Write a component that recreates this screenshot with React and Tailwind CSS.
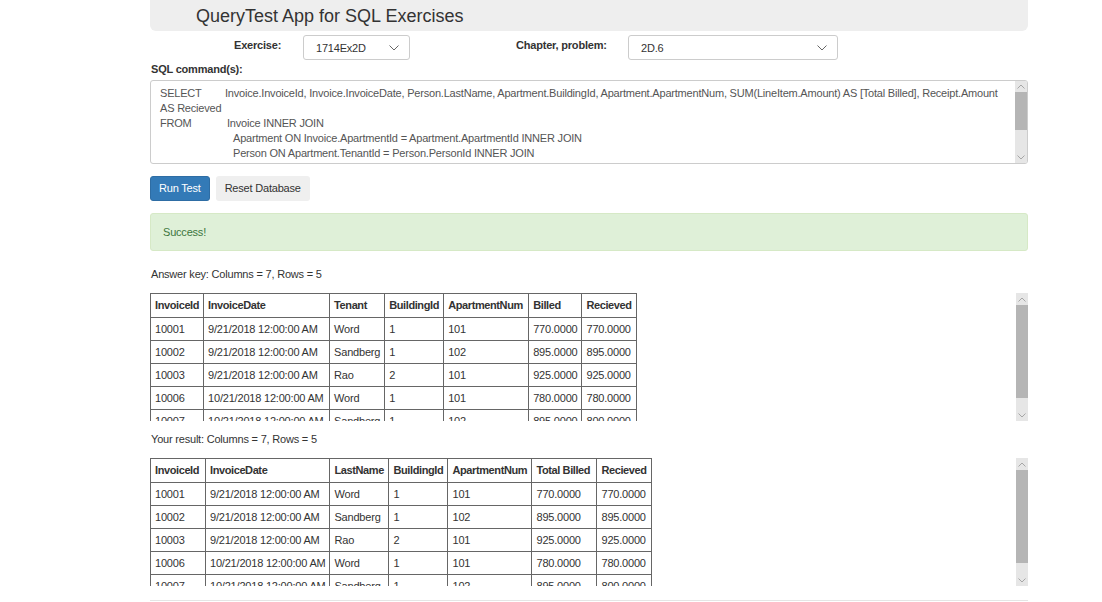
import React from "react";

const answerKey = {
  cols: [
    ["InvoiceId", "w-[52px]"],
    ["InvoiceDate", "w-[126px]"],
    ["Tenant", "w-[53px]"],
    ["BuildingId", "w-[59px]"],
    ["ApartmentNum", "w-[85px]"],
    ["Billed", "w-[53px]"],
    ["Recieved", "w-[54px]"],
  ],
  rows: [
    ["10001", "9/21/2018 12:00:00 AM", "Word", "1", "101", "770.0000", "770.0000"],
    ["10002", "9/21/2018 12:00:00 AM", "Sandberg", "1", "102", "895.0000", "895.0000"],
    ["10003", "9/21/2018 12:00:00 AM", "Rao", "2", "101", "925.0000", "925.0000"],
    ["10006", "10/21/2018 12:00:00 AM", "Word", "1", "101", "780.0000", "780.0000"],
    ["10007", "10/21/2018 12:00:00 AM", "Sandberg", "1", "102", "895.0000", "800.0000"],
  ],
};

const yourResult = {
  cols: [
    ["InvoiceId", "w-[55px]"],
    ["InvoiceDate", "w-[123px]"],
    ["LastName", "w-[59px]"],
    ["BuildingId", "w-[59px]"],
    ["ApartmentNum", "w-[84px]"],
    ["Total Billed", "w-[65px]"],
    ["Recieved", "w-[54px]"],
  ],
  rows: answerKey.rows,
};

const Chevron = ({ up, className }) => (
  <svg width="8" height="5" viewBox="0 0 8 5" className={className}>
    <path
      d={up ? "M0.5 4.5 L4 1 L7.5 4.5" : "M0.5 0.5 L4 4 L7.5 0.5"}
      fill="none"
      stroke="currentColor"
      strokeWidth="1"
    />
  </svg>
);

// fake windows-style scrollbar, drawn beside the scroll content
const ScrollBar = ({ arrow = "h-[12px]", thumb, rest }) => (
  <div className="w-[12px] flex flex-col bg-[#e6e6e6] shrink-0">
    <div className={`${arrow} flex items-center justify-center text-[#a6a6a6]`}>
      <Chevron up />
    </div>
    <div className={`${thumb} bg-[#b5b5b5]`}></div>
    <div className={rest}></div>
    <div className={`${arrow} flex items-center justify-center text-[#a6a6a6]`}>
      <Chevron />
    </div>
  </div>
);

const Select = ({ value, width }) => (
  <div
    className={`${width} h-[25px] border border-[#ccc] rounded-[3px] bg-white flex items-center justify-between pl-[12px] pr-[10px] text-[#333]`}
  >
    <span className="pt-[2px]">{value}</span>
    <svg width="10" height="6" viewBox="0 0 10 6" className="text-[#666]">
      <path d="M0.5 0.5 L5 5 L9.5 0.5" fill="none" stroke="currentColor" strokeWidth="1" />
    </svg>
  </div>
);

const ResultTable = ({ data, thumb, rest }) => (
  <div className="flex h-[128px] overflow-hidden">
    <div className="flex-1 overflow-hidden">
      <table className="border-collapse text-[#333]">
        <thead>
          <tr className="h-[24px]">
            {data.cols.map(([name, w]) => (
              <th
                key={name}
                className={`${w} border border-[#666] px-[4px] text-left font-bold tracking-[-0.4px] whitespace-nowrap`}
              >
                {name}
              </th>
            ))}
          </tr>
        </thead>
        <tbody>
          {data.rows.map((row) => (
            <tr key={row[0]} className="h-[23px]">
              {row.map((cell, i) => (
                <td key={i} className="border border-[#666] px-[4px] whitespace-nowrap">
                  {cell}
                </td>
              ))}
            </tr>
          ))}
        </tbody>
      </table>
    </div>
    <ScrollBar thumb={thumb} rest={rest} />
  </div>
);

export default function App() {
  return (
    <div className="w-[1102px] h-[602px] bg-white overflow-hidden font-['Liberation_Sans',Arial,sans-serif] text-[11px] tracking-[-0.2px] text-[#333]">
      <div className="ml-[150px] w-[878px] flex flex-col">
        <div className="h-[31px] bg-[#eeeeee] rounded-b-[6px] flex items-center pl-[46px]">
          <h1 className="text-[18px] tracking-normal text-[#333] pt-[2px]">QueryTest App for SQL Exercises</h1>
        </div>

        <div className="flex items-start mt-[4px] h-[25px]">
          <label className="font-bold ml-[84px] w-[69px] pt-[2px]">Exercise:</label>
          <Select value="1714Ex2D" width="w-[107px]" />
          <label className="font-bold ml-[106px] w-[112px] pt-[2px]">Chapter, problem:</label>
          <Select value="2D.6" width="w-[210px]" />
        </div>

        <label className="font-bold mt-[2px] ml-[1px] leading-[14px]">SQL command(s):</label>

        <div className="mt-[4px] h-[84px] border border-[#ccc] rounded-[3px] flex overflow-hidden">
          <div className="flex-1 pl-[9px] pt-[5px] leading-[15px] text-[#555] overflow-hidden whitespace-nowrap">
            <div>
              <span className="inline-block w-[65px]">SELECT</span>
              Invoice.InvoiceId, Invoice.InvoiceDate, Person.LastName, Apartment.BuildingId,
              Apartment.ApartmentNum, SUM(LineItem.Amount) AS [Total Billed], Receipt.Amount
            </div>
            <div>AS Recieved</div>
            <div>
              <span className="inline-block w-[67px]">FROM</span>
              Invoice INNER JOIN
            </div>
            <div className="pl-[73px]">
              Apartment ON Invoice.ApartmentId = Apartment.ApartmentId INNER JOIN
            </div>
            <div className="pl-[73px]">Person ON Apartment.TenantId = Person.PersonId INNER JOIN</div>
            <div className="pl-[73px]">LineItem ON Invoice.InvoiceId = LineItem.InvoiceId INNER JOIN</div>
          </div>
          <ScrollBar arrow="h-[11px]" thumb="h-[38px]" rest="flex-1" />
        </div>

        <div className="flex gap-[6px] mt-[12px]">
          <button className="h-[25px] px-[8px] bg-[#337ab7] border border-[#2e6da4] rounded-[3px] text-white">
            Run Test
          </button>
          <button className="h-[25px] px-[9px] bg-[#efefef] rounded-[3px] text-[#333]">
            Reset Database
          </button>
        </div>

        <div className="mt-[12px] h-[38px] bg-[#dff0d8] border border-[#d6e9c6] rounded-[3px] flex items-center pl-[12px] text-[#3c763d]">
          Success!
        </div>

        <p className="mt-[16px] leading-[14px] ml-[1px]">Answer key: Columns = 7, Rows = 5</p>

        <div className="mt-[12px]">
          <ResultTable data={answerKey} thumb="h-[93px]" rest="flex-1" />
        </div>

        <p className="mt-[11px] leading-[14px] ml-[1px]">Your result: Columns = 7, Rows = 5</p>

        <div className="mt-[12px]">
          <ResultTable data={yourResult} thumb="h-[93px]" rest="flex-1" />
        </div>

        <div className="mt-[14px] border-t border-[#e5e5e5]"></div>
      </div>
    </div>
  );
}
